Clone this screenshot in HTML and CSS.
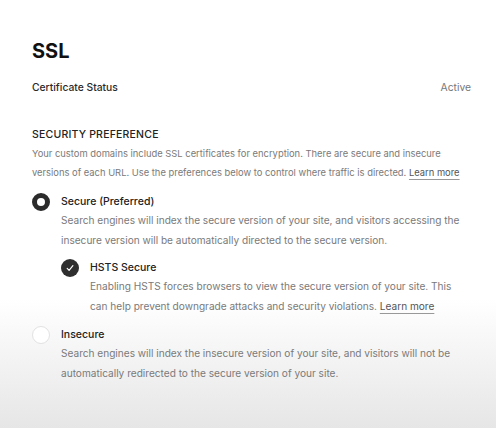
FILE: index.html
```html
<!DOCTYPE html>
<html>
<head>
<meta charset="utf-8">
<link rel="stylesheet" href="styles.css">
</head>
<body>
<div class="page">
  <h1 class="title">SSL</h1>
  <div class="status-row">
    <span class="status-label">Certificate Status</span>
    <span class="status-value">Active</span>
  </div>
  <h2 class="section-title">SECURITY PREFERENCE</h2>
  <p class="desc intro">Your custom domains include SSL certificates for encryption. There are secure and insecure versions of each URL. Use the preferences below to control where traffic is directed. <a class="link">Learn more</a></p>

  <div class="option">
    <span class="radio radio-on"></span>
    <div class="option-body">
      <div class="option-title">Secure (Preferred)</div>
      <p class="desc">Search engines will index the secure version of your site, and visitors accessing the insecure version will be automatically directed to the secure version.</p>
      <div class="option sub">
        <span class="check">
          <svg viewBox="0 0 18 18" width="18" height="18"><path d="M6.2 9.4 L8.1 11.3 L11.9 6.7" fill="none" stroke="#fff" stroke-width="1.2" stroke-linecap="round" stroke-linejoin="round"/></svg>
        </span>
        <div class="option-body">
          <div class="option-title">HSTS Secure</div>
          <p class="desc">Enabling HSTS forces browsers to view the secure version of your site. This<br>can help prevent downgrade attacks and security violations. <a class="link">Learn more</a></p>
        </div>
      </div>
    </div>
  </div>

  <div class="option last">
    <span class="radio"></span>
    <div class="option-body">
      <div class="option-title">Insecure</div>
      <p class="desc">Search engines will index the insecure version of your site, and visitors will not be automatically redirected to the secure version of your site.</p>
    </div>
  </div>
</div>
</body>
</html>
```

FILE: styles.css
```css
html, body {
  margin: 0;
  padding: 0;
}
body {
  width: 496px;
  height: 428px;
  overflow: hidden;
  font-family: Inter, "Liberation Sans", sans-serif;
  background: linear-gradient(to bottom, #ffffff 0px, #ffffff 300px, #e6e6e6 428px);
  color: #1a1a1a;
}
.page {
  padding: 39px 25px 0 32px;
}
.title {
  margin: 0;
  font-size: 20px;
  font-weight: 700;
  line-height: 24px;
  color: #111;
}
.status-row {
  display: flex;
  justify-content: space-between;
  align-items: center;
  margin-top: 17px;
  font-size: 10.3px;
  line-height: 14px;
}
.status-label {
  font-weight: 500;
  color: #2a2a2a;
}
.status-value {
  color: #777;
}
.section-title {
  margin: 34px 0 0;
  font-size: 10.5px;
  font-weight: 500;
  line-height: 14px;
  letter-spacing: 0.2px;
  color: #222;
}
.desc {
  margin: 0;
  font-size: 10.1px;
  line-height: 19.5px;
  color: #7a7a7a;
}
.desc.intro {
  margin-top: 2px;
  font-size: 9.4px;
  line-height: 19px;
}
.link {
  color: #555;
  text-decoration: underline;
  text-decoration-color: #999;
  text-underline-offset: 3px;
}
.option {
  display: flex;
  gap: 11px;
  margin-top: 11px;
}
.option.sub {
  margin-top: 9px;
}
.option.last {
  margin-top: 10px;
}
.radio {
  flex: none;
  width: 18px;
  height: 18px;
  border-radius: 50%;
  box-sizing: border-box;
  border: 1px solid #e2e2e2;
  background: #fff;
}
.radio-on {
  border: 5.5px solid #2b2b2b;
  background: #fff;
}
.check {
  flex: none;
  width: 18px;
  height: 18px;
  border-radius: 50%;
  background: #2f2f2f;
  display: flex;
}
.option-body {
  flex: 1;
}
.option-title {
  font-size: 10.5px;
  font-weight: 500;
  line-height: 18px;
  color: #222;
}
```
